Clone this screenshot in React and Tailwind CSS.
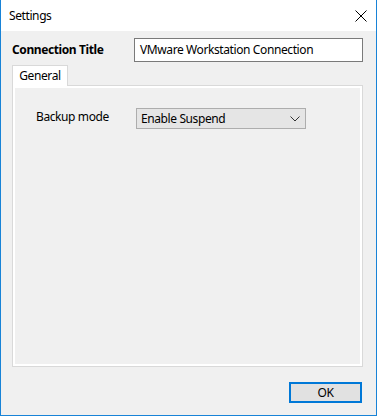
export default function App() {
  const font = { fontFamily: '"Noto Sans", "Open Sans", Arial, sans-serif' };
  return (
    <div
      className="w-[377px] h-[416px] flex flex-col bg-[#f0f0f0] border-l border-r border-b border-[#1883d7] text-[12px] tracking-[-0.4px] text-black overflow-hidden"
      style={font}
    >
      <div className="h-[31px] shrink-0 bg-white flex items-center pl-[8px] pr-[9px]">
        <span className="leading-none">Settings</span>
        <svg className="ml-auto" width="12" height="12" viewBox="0 0 12 12">
          <path d="M0.5 0.5 L11.5 11.5 M11.5 0.5 L0.5 11.5" stroke="#000" strokeWidth="1" fill="none" />
        </svg>
      </div>
      <div className="flex items-center mt-[7px] pl-[11px]">
        <div className="w-[122px] font-bold text-[12px]">Connection Title</div>
        <div className="w-[229px] h-[24px] border border-[#7a7a7a] bg-white flex items-center pl-[5px]">
          VMware Workstation Connection
        </div>
      </div>
      <div className="ml-[11px] mt-[3px] flex flex-col">
        <div className="relative z-10 w-[56px] h-[21px] -mb-px bg-white border border-b-0 border-[#d9d9d9] flex items-center justify-center">
          General
        </div>
        <div className="w-[351px] h-[282px] border border-[#d9d9d9]">
          <div className="w-full h-full border-2 border-white bg-[#f0f0f0]">
            <div className="flex items-center mt-[20px] pl-[21px]">
              <div className="w-[100px] -mt-[4px]">Backup mode</div>
              <div className="w-[170px] h-[21px] border border-[#adadad] bg-[#e5e5e5] flex items-center pl-[4px] pr-[5px]">
                <span>Enable Suspend</span>
                <svg className="ml-auto" width="10" height="6" viewBox="0 0 10 6">
                  <path d="M0.5 0.5 L5 5 L9.5 0.5" stroke="#333" strokeWidth="1" fill="none" />
                </svg>
              </div>
            </div>
          </div>
        </div>
      </div>
      <div className="flex justify-end pr-[14px] mt-[15px]">
        <div className="w-[73px] h-[21px] border-2 border-[#0078d7] bg-[#e1e1e1] flex items-center justify-center">
          OK
        </div>
      </div>
    </div>
  );
}
